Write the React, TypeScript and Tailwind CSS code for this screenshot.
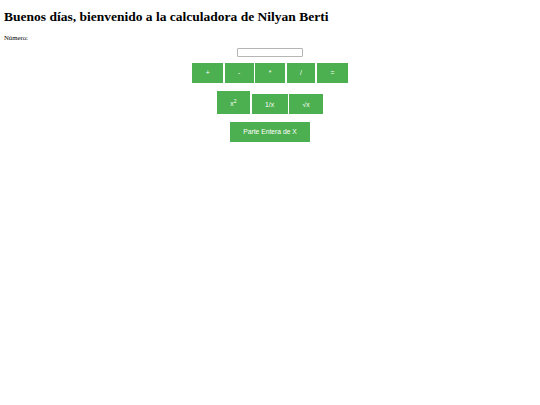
import React from 'react';

const btn =
  "bg-[#4caf50] text-white text-[6.75px] leading-[7.5px] px-[13.5px] py-[6.3px] font-['Liberation_Sans',Arial,sans-serif]";

const App: React.FC = () => {
  return (
    <div className="min-h-screen w-full bg-white pl-[4px] pr-[4px] font-['Liberation_Serif','Times_New_Roman',serif] text-black">
      {/* Title */}
      <h1 className="pt-[9px] text-[13.5px] leading-[15.5px] font-bold">
        Buenos días, bienvenido a la calculadora de Nilyan Berti
      </h1>

      <p className="mt-[9px] text-[6.75px] leading-[7.75px]">Número:</p>

      {/* Input */}
      <div className="mt-[7px] flex justify-center">
        <input
          type="text"
          className="h-[8.4px] w-[66.3px] rounded-[1px] border border-[#b5b5b5] bg-white outline-none"
        />
      </div>

      {/* Basic operations */}
      <div className="mt-[6.3px] flex justify-center gap-[1.5px]">
        <button className={btn}>+</button>
        <button className={btn}>-</button>
        <button className={btn}>*</button>
        <button className={btn}>/</button>
        <button className={btn}>=</button>
      </div>

      {/* Unary operations */}
      <div className="mt-[8.3px] flex items-end justify-center gap-[1.5px]">
        <button className={btn + ' pt-[8.6px] mb-[0.7px]'}>
          x<sup>2</sup>
        </button>
        <button className={btn}>1/x</button>
        <button className={btn}>√x</button>
      </div>

      <div className="mt-[7.6px] flex justify-center">
        <button className={btn}>Parte Entera de X</button>
      </div>
    </div>
  );
};

export default App;
